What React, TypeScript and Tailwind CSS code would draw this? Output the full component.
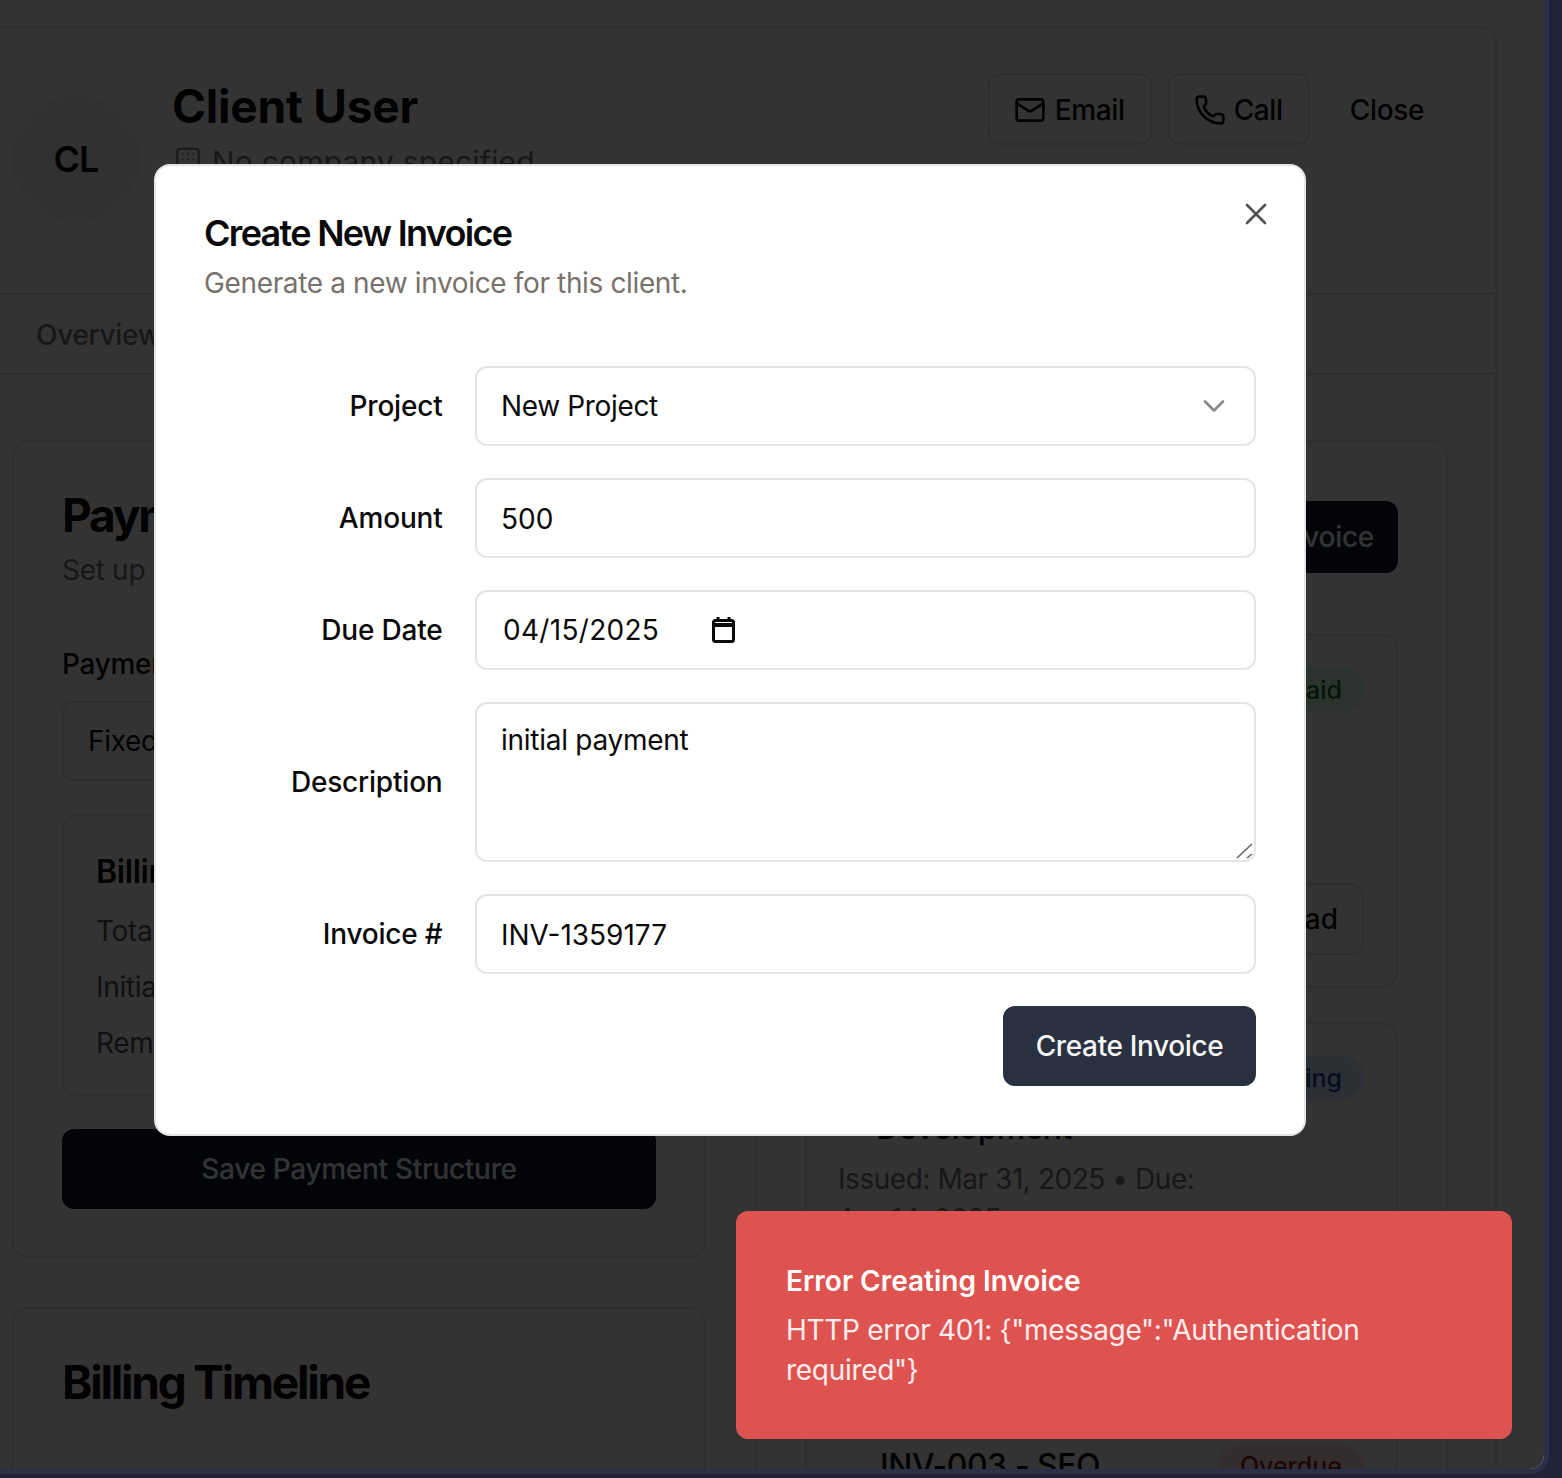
import React from 'react';
import { Building, ChevronDown, Mail, Phone, X } from 'lucide-react';

const Row = ({ label, children }: { label: string; children: React.ReactNode }) => (
  <div className="grid grid-cols-[238.5px_1fr] items-center gap-x-[32.5px]">
    <label className="text-right text-[28px] leading-[28px] font-medium tracking-[-0.2px] text-[#0a0a0a]">{label}</label>
    {children}
  </div>
);

const Field = ({ children, className = '' }: { children: React.ReactNode; className?: string }) => (
  <div className={`flex h-[80px] items-center rounded-[12px] border-2 border-[#e5e5e5] bg-white px-[24px] text-[28px] text-[#0a0a0a] ${className}`}>
    {children}
  </div>
);

const Section = ({ children, className = '' }: { children: React.ReactNode; className?: string }) => (
  <section className={`rounded-[16px] border-2 border-[#e5e7eb] ${className}`}>{children}</section>
);

export default function App() {
  return (
    <div className="relative h-[1478px] w-[1562px] overflow-hidden bg-[#1e2539] font-['Inter',sans-serif]">
      {/* sidebar edge round the page */}
      <div className="h-[1474px] w-[1549px] rounded-br-[18px] bg-[#2a3048]">
        <div className="h-[1469px] w-[1544px] overflow-hidden rounded-br-[14px] bg-white">
          <div className="ml-[-10px] mt-[26px] h-[1600px] w-[1507px] rounded-t-[16px] border-2 border-[#e5e7eb]">
            <div className="flex h-[267px] items-start justify-between border-b-2 border-[#e5e7eb] pl-[20px] pr-[45px] pt-[45px]">
              <div className="flex gap-[33px]">
                <div className="mt-[22px] flex h-[128px] w-[128px] items-center justify-center rounded-full bg-[#f3f4f6] text-[36px] font-semibold tracking-[-1px] text-[#0a0a0a]">CL</div>
                <div className="ml-[-1px] pt-[1px]">
                  <h1 className="text-[46px] font-bold leading-[64px] tracking-[-0.2px] text-[#0a0a0a]">Client User</h1>
                  <p className="mt-[2px] flex items-center gap-[8px] text-[30px] leading-[44px] tracking-[0.2px] text-[#737373]">
                    <Building size={32} strokeWidth={1.5} />
                    No company specified
                  </p>
                </div>
              </div>
              <div className="flex items-center gap-[16px] text-[28px] font-medium tracking-[-0.36px] text-[#0a0a0a]">
                <div className="flex h-[72px] items-center gap-[9px] rounded-[12px] border-2 border-[#e5e7eb] pl-[24px] pr-[25px] pt-[2px]">
                  <Mail size={32} strokeWidth={2} />
                  Email
                </div>
                <div className="flex h-[72px] items-center gap-[8px] rounded-[12px] border-2 border-[#e5e7eb] pl-[24px] pr-[25px] pt-[2px]">
                  <Phone size={32} strokeWidth={2} />
                  Call
                </div>
                <div className="flex h-[72px] items-center pl-[24px] pr-[26px] pt-[2px]">Close</div>
              </div>
            </div>
            <div className="flex h-[80px] items-center border-b-2 border-[#e5e7eb] pl-[44px] pt-[2px] text-[28px] font-medium tracking-[-0.3px] text-[#737373]">Overview</div>

            <div className="mt-[65px] grid grid-cols-[694px_693px] gap-x-[49px] pl-[20px]">
              <div className="flex flex-col gap-[49px]">
                <Section className="h-[818px] p-[48px]">
                  <h2 className="text-[46px] font-bold leading-[50px] tracking-[-2.2px] text-[#0a0a0a]">Payment Structure</h2>
                  <p className="mt-[10px] text-[28px] leading-[40px] tracking-[-0.3px] text-[#737373]">Set up payment terms</p>
                  <div className="mt-[54px] text-[28px] font-medium leading-[40px] tracking-[-0.3px] text-[#0a0a0a]">Payment Type</div>
                  <div className="mt-[17px] flex h-[80px] items-center rounded-[12px] border-2 border-[#e5e7eb] px-[24px] text-[28px] tracking-[-0.3px] text-[#0a0a0a]">Fixed Price</div>
                  <div className="mt-[33px] h-[282px] rounded-[16px] border-2 border-[#e5e7eb] px-[32px] pt-[34px]">
                    <div className="text-[32px] font-semibold leading-[44px] tracking-[-0.4px] text-[#0a0a0a]">Billing Summary</div>
                    <div className="mt-[17px] flex flex-col gap-[16px] text-[28px] leading-[40px] tracking-[-0.3px] text-[#52525b]">
                      <span>Total</span>
                      <span>Initial</span>
                      <span>Remaining</span>
                    </div>
                  </div>
                  <div className="mt-[33px] flex h-[80px] items-center justify-center rounded-[12px] bg-[#0f172a] text-[28px] font-medium tracking-[-0.3px] text-white">Save Payment Structure</div>
                </Section>
                <Section className="h-[400px] p-[48px]">
                  <h2 className="text-[46px] font-bold leading-[50px] tracking-[-2.2px] text-[#0a0a0a]">Billing Timeline</h2>
                </Section>
              </div>

              <Section className="h-[1100px] px-[48px] pt-[59px]">
                <div className="flex justify-end">
                  <div className="flex h-[72px] items-center rounded-[12px] bg-[#0f172a] px-[24px] text-[28px] font-medium tracking-[-0.3px] text-white">Create Invoice</div>
                </div>
                <div className="mt-[61px] h-[354px] rounded-[16px] border-2 border-[#e5e7eb] p-[32px]">
                  <div className="flex justify-end">
                    <span className="rounded-full bg-[#dcfce7] px-[22px] py-[4px] text-[25px] font-medium leading-[36px] text-[#166534]">Paid</span>
                  </div>
                  <div className="mt-[171px] flex justify-end">
                    <div className="flex h-[72px] items-center rounded-[12px] border-2 border-[#e5e7eb] px-[24px] text-[28px] font-medium text-[#0a0a0a]">Download</div>
                  </div>
                </div>
                <div className="mt-[34px] h-[363px] rounded-[16px] border-2 border-[#e5e7eb] p-[32px]">
                  <div className="flex items-start justify-between">
                    <div className="w-[300px] pl-[37px] text-[32px] font-medium leading-[48px] tracking-[-0.6px] text-[#0a0a0a]">INV-002 - Web Development</div>
                    <span className="rounded-full bg-[#dbeafe] px-[22px] py-[4px] text-[25px] font-medium leading-[36px] text-[#1e40af]">Pending</span>
                  </div>
                  <p className="ml-[-1px] mt-[7px] w-[400px] text-[28px] leading-[40px] tracking-[-0.45px] text-[#737373]">Issued: Mar 31, 2025 • Due: Apr 14, 2025</p>
                </div>
                <div className="mt-[25px] rounded-[16px] border-2 border-[#e5e7eb] p-[32px]">
                  <div className="flex items-start justify-between">
                    <div className="pl-[41px] text-[32px] font-medium leading-[44px] tracking-[-0.5px] text-[#0a0a0a]">INV-003 - SEO</div>
                    <span className="rounded-full bg-[#fee2e2] px-[22px] py-[4px] text-[25px] font-medium leading-[36px] text-[#991b1b]">Overdue</span>
                  </div>
                </div>
              </Section>
            </div>
          </div>
        </div>
      </div>

      {/* overlay */}
      <div className="absolute left-0 top-0 h-[1469px] w-[1544px] rounded-br-[14px] bg-black/80" />

      {/* dialog */}
      <div className="absolute left-[154px] top-[164px] h-[972px] w-[1152px] rounded-[16px] border-2 border-[#e5e5e5] bg-white px-[48px] pt-[45px]">
        <button className="absolute right-[30px] top-[30px] text-[#525252]" aria-label="Close">
          <X size={36} strokeWidth={1.75} />
        </button>
        <h2 className="text-[36px] font-semibold leading-[44px] tracking-[-1.7px] text-[#0a0a0a]">Create New Invoice</h2>
        <p className="mt-[8px] text-[28px] leading-[40px] tracking-[-0.36px] text-[#78716c]">Generate a new invoice for this client.</p>

        <div className="mt-[63px] flex flex-col gap-[32px]">
          <Row label="Project">
            <Field className="justify-between tracking-[-0.35px]">
              <span>New Project</span>
              <ChevronDown size={36} strokeWidth={1.75} className="mr-[-2px] text-[#8a8a8a]" />
            </Field>
          </Row>
          <Row label="Amount">
            <Field className="pt-[2px]">500</Field>
          </Row>
          <Row label="Due Date">
            <Field>
              <span className="ml-[2px] tracking-[0.3px]">04/15/2025</span>
              <svg className="ml-[53px]" width="23" height="26" viewBox="0 0 23 26" fill="none">
                <path d="M6 0v4M17 0v4" stroke="#0a0a0a" strokeWidth="3" />
                <rect x="1.5" y="3.5" width="20" height="21" rx="2" stroke="#0a0a0a" strokeWidth="3" />
                <path d="M1 6h21v4H1z" fill="#0a0a0a" />
              </svg>
            </Field>
          </Row>
          <Row label="Description">
            <div className="relative h-[160px] rounded-[12px] border-2 border-[#e5e5e5] bg-white px-[24px] py-[14px] text-[28px] leading-[44px] tracking-[-0.27px] text-[#0a0a0a]">
              initial payment
              <svg className="absolute bottom-[1px] right-0" width="18" height="16" viewBox="0 0 18 16" fill="none">
                <path d="M1 15L16 1M11 15l5-4" stroke="#666" strokeWidth="1.6" />
              </svg>
            </div>
          </Row>
          <Row label="Invoice #">
            <Field className="pt-[2px]">INV-1359177</Field>
          </Row>
        </div>

        <div className="mt-[32px] flex justify-end">
          <button className="flex h-[80px] w-[253px] items-center justify-center rounded-[12px] bg-[#293040] text-[28px] font-medium tracking-[-0.36px] text-[#f5f5f5]">Create Invoice</button>
        </div>
      </div>

      {/* toast */}
      <div className="absolute left-[736px] top-[1211px] h-[228px] w-[776px] rounded-[12px] bg-[#de534f] px-[50px] pt-[50px] text-white">
        <div className="text-[28px] font-semibold leading-[40px]">Error Creating Invoice</div>
        <p className="mt-[8.5px] w-[640px] text-[28px] leading-[40px] tracking-[-0.3px] text-white/90">HTTP error 401: {'{"message":"Authentication required"}'}</p>
      </div>
    </div>
  );
}
